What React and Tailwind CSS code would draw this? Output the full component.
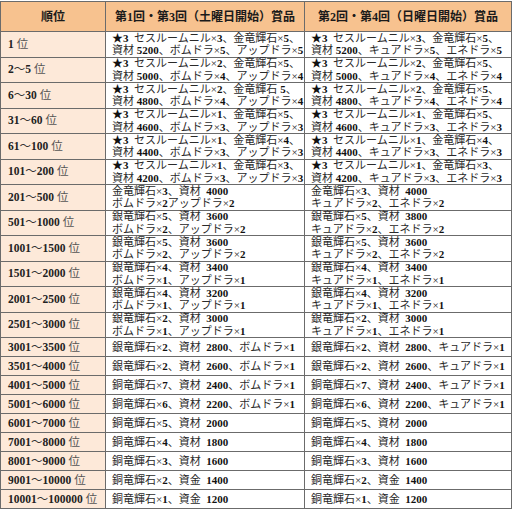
import React from "react";

const S = "\u00a0";
const rows = [
  ["1", ["★3" + S + S + "セスルームニル×3、金竜輝石×5、", "資材" + S + "5200、ボムドラ×5、アップドラ×5"], ["★3" + S + S + "セスルームニル×3、金竜輝石×5、", "資材" + S + "5200、キュアドラ×5、エネドラ×5"]],
  ["2～5", ["★3" + S + S + "セスルームニル×2、金竜輝石×5、", "資材" + S + "5000、ボムドラ×4、アップドラ×4"], ["★3" + S + S + "セスルームニル×2、金竜輝石×5、", "資材" + S + "5000、キュアドラ×4、エネドラ×4"]],
  ["6～30", ["★3" + S + S + "セスルームニル×2、金竜輝石" + S + "5、", "資材" + S + "4800、ボムドラ×4、アップドラ×4"], ["★3" + S + S + "セスルームニル×2、金竜輝石×5、", "資材" + S + "4800、キュアドラ×4、エネドラ×4"]],
  ["31～60", ["★3" + S + S + "セスルームニル×1、金竜輝石×5、", "資材" + S + "4600、ボムドラ×3、アップドラ×3"], ["★3" + S + S + "セスルームニル×1、金竜輝石×5、", "資材" + S + "4600、キュアドラ×3、エネドラ×3"]],
  ["61～100", ["★3" + S + S + "セスルームニル×1、金竜輝石×4、", "資材" + S + "4400、ボムドラ×3、アップドラ×3"], ["★3" + S + S + "セスルームニル×1、金竜輝石×4、", "資材" + S + "4400、キュアドラ×3、エネドラ×3"]],
  ["101～200", ["★3" + S + S + "セスルームニル×1、金竜輝石×3、", "資材" + S + "4200、ボムドラ×3、アップドラ×3"], ["★3" + S + S + "セスルームニル×1、金竜輝石×3、", "資材" + S + "4200、キュアドラ×3、エネドラ×3"]],
  ["201～500", ["金竜輝石×3、資材" + S + S + "4000", "ボムドラ×2アップドラ×2"], ["金竜輝石×3、資材" + S + S + "4000", "キュアドラ×2、エネドラ×2"]],
  ["501～1000", ["銀竜輝石×5、資材" + S + S + "3600", "ボムドラ×2、アップドラ×2"], ["銀竜輝石×5、資材" + S + S + "3800", "キュアドラ×2、エネドラ×2"]],
  ["1001～1500", ["銀竜輝石×5、資材" + S + S + "3600", "ボムドラ×2、アップドラ×2"], ["銀竜輝石×5、資材" + S + S + "3600", "キュアドラ×2、エネドラ×2"]],
  ["1501～2000", ["銀竜輝石×4、資材" + S + S + "3400", "ボムドラ×1、アップドラ×1"], ["銀竜輝石×4、資材" + S + S + "3400", "キュアドラ×1、エネドラ×1"]],
  ["2001～2500", ["銀竜輝石×4、資材" + S + S + "3200", "ボムドラ×1、アップドラ×1"], ["銀竜輝石×4、資材" + S + S + "3200", "キュアドラ×1、エネドラ×1"]],
  ["2501～3000", ["銀竜輝石×2、資材" + S + S + "3000", "ボムドラ×1、アップドラ×1"], ["銀竜輝石×2、資材" + S + S + "3000", "キュアドラ×1、エネドラ×1"]],
  ["3001～3500", ["銀竜輝石×2、資材" + S + S + "2800、ボムドラ×1"], ["銀竜輝石×2、資材" + S + S + "2800、キュアドラ×1"]],
  ["3501～4000", ["銀竜輝石×2、資材" + S + S + "2600、ボムドラ×1"], ["銀竜輝石×2、資材" + S + S + "2600、キュアドラ×1"]],
  ["4001～5000", ["銅竜輝石×7、資材" + S + S + "2400、ボムドラ×1"], ["銅竜輝石×7、資材" + S + S + "2400、キュアドラ×1"]],
  ["5001～6000", ["銅竜輝石×6、資材" + S + S + "2200、ボムドラ×1"], ["銅竜輝石×6、資材" + S + S + "2200、キュアドラ×1"]],
  ["6001～7000", ["銅竜輝石×5、資材" + S + S + "2000"], ["銅竜輝石×5、資材" + S + S + "2000"]],
  ["7001～8000", ["銅竜輝石×4、資材" + S + S + "1800"], ["銅竜輝石×4、資材" + S + S + "1800"]],
  ["8001～9000", ["銅竜輝石×3、資材" + S + S + "1600"], ["銅竜輝石×3、資材" + S + S + "1600"]],
  ["9001～10000", ["銅竜輝石×2、資金" + S + S + "1400"], ["銅竜輝石×2、資金" + S + S + "1400"]],
  ["10001～100000", ["銅竜輝石×1、資金" + S + S + "1200"], ["銅竜輝石×1、資金" + S + S + "1200"]],
];

function Rich({ text }) {
  const parts = text.split(/([0-9]+|★)/);
  return (
    <>
      {parts.map((p, i) =>
        /^([0-9]+|★)$/.test(p) ? (
          <span key={i} className="font-bold text-[#111]">
            {p}
          </span>
        ) : (
          <span key={i}>{p}</span>
        )
      )}
    </>
  );
}

function Cell({ lines }) {
  return (
    <td className="border border-[#6b6b6b] bg-white pl-[6px] pr-0 align-middle text-[11px] text-[#2a2a2a] whitespace-nowrap">
      <div className="flex flex-col justify-center h-[17px]">
        {lines.map((l, i) => (
          <div key={i} className="h-[12.5px] leading-[12.5px] flex items-center">
            <span>
              <Rich text={l} />
            </span>
          </div>
        ))}
      </div>
    </td>
  );
}

export default function App() {
  return (
    <div
      className="w-[512px] h-[509px] bg-white pt-[1px] overflow-hidden"
      style={{ fontFamily: '"Liberation Serif", "Noto Sans CJK JP", serif' }}
    >
      <table className="w-[511px] border-collapse table-fixed">
        <colgroup>
          <col className="w-[105px]" />
          <col className="w-[199px]" />
          <col className="w-[207px]" />
        </colgroup>
        <thead>
          <tr className="h-[30px] bg-[#f7c28f]">
            <th className="border border-[#6b6b6b] text-[12px] leading-[14px] font-bold text-[#1a1a1a]">順位</th>
            <th className="border border-[#6b6b6b] text-[12px] leading-[14px] font-bold text-[#1a1a1a] whitespace-nowrap">第1回・第3回（土曜日開始）賞品</th>
            <th className="border border-[#6b6b6b] text-[12px] leading-[14px] font-bold text-[#1a1a1a] whitespace-nowrap">第2回・第4回（日曜日開始）賞品</th>
          </tr>
        </thead>
        <tbody>
          {rows.map(([rank, a, b], i) => (
            <tr key={i} className={a.length > 1 ? "h-[25.5px]" : "h-[19px]"}>
              <td className="border border-[#6b6b6b] bg-[#fde9d9] pl-[7px] text-[11.5px] text-[#2a2a2a] whitespace-nowrap align-middle">
                <div className="h-[15px] flex items-center leading-[15px]">
                  <span className="font-bold text-[#222]">{rank.split("～")[0]}</span>
                  {rank.includes("～") && <span className="text-[#333]">～</span>}
                  {rank.includes("～") && <span className="font-bold text-[#222]">{rank.split("～")[1]}</span>}
                  <span className="ml-[3px] text-[#555]">位</span>
                </div>
              </td>
              <Cell lines={a} />
              <Cell lines={b} />
            </tr>
          ))}
        </tbody>
      </table>
    </div>
  );
}
